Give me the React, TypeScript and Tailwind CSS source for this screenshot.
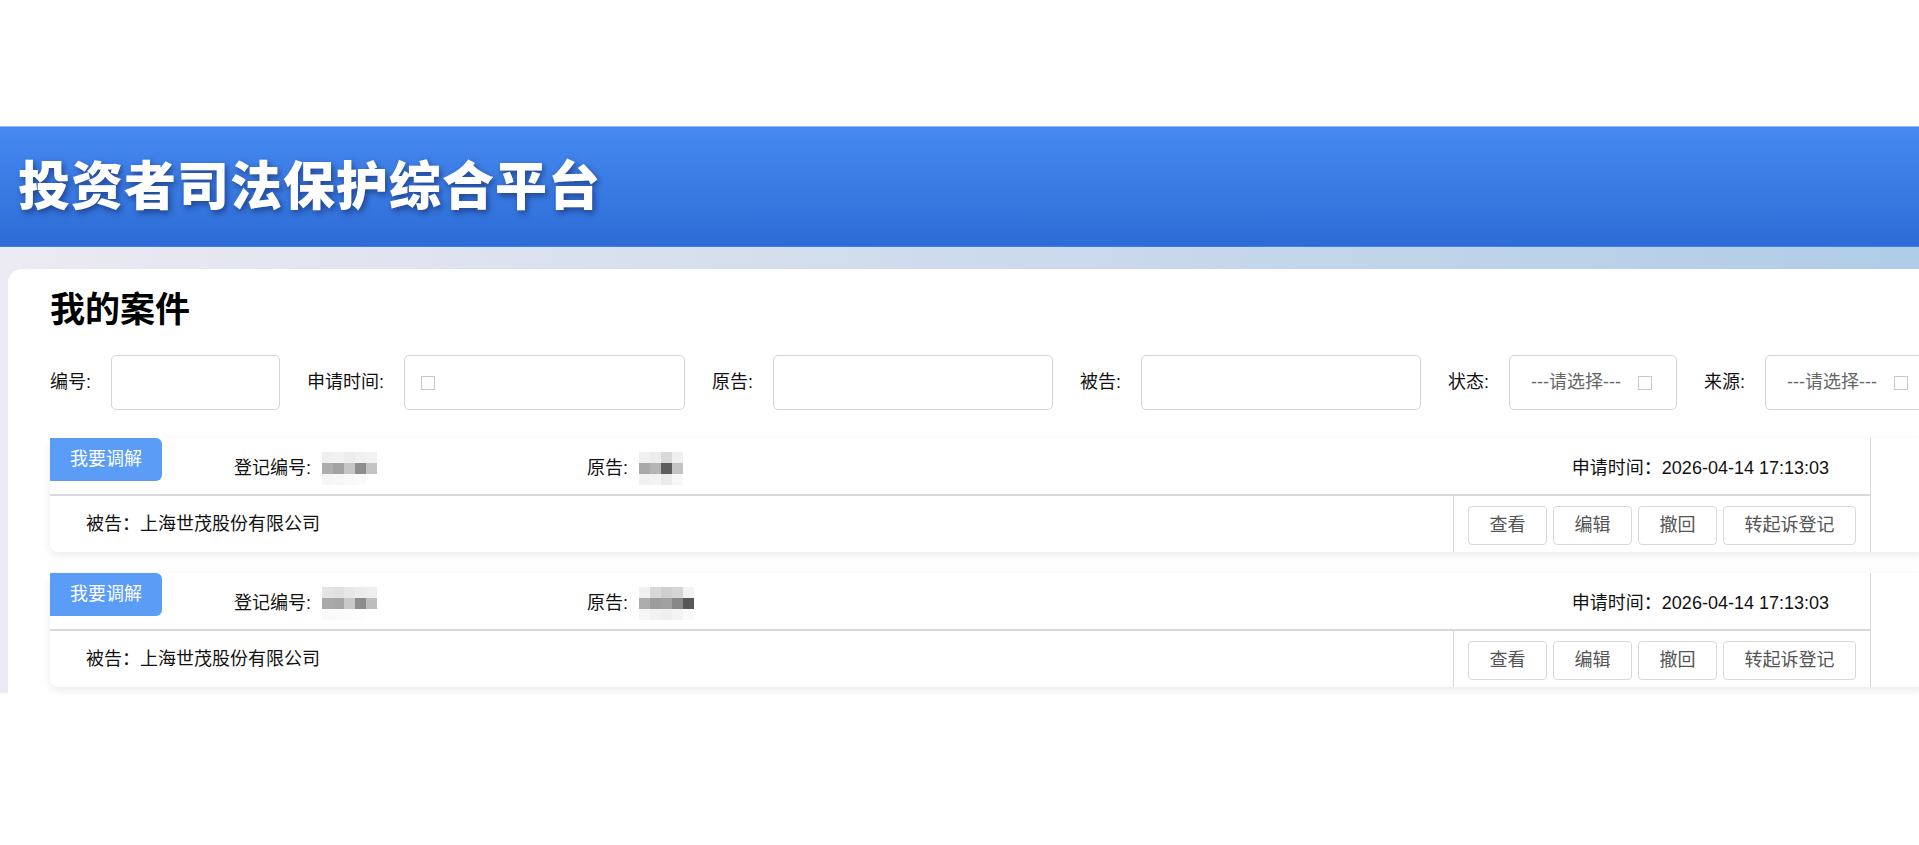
type MosaicProps = { rows: string[][] };

// pixelated redaction block used for masked case numbers / names
function Mosaic({ rows }: MosaicProps) {
  return (
    <div className="flex flex-col blur-[0.6px]">
      {rows.map((row, i) => (
        <div key={i} className="flex">
          {row.map((c, j) => (
            <div key={j} className="h-[11px] w-[11px]" style={{ backgroundColor: c }} />
          ))}
        </div>
      ))}
    </div>
  );
}

type CaseItem = {
  id: number;
  numberMask: string[][];
  plaintiffMask: string[][];
  defendant: string;
  appliedAt: string;
};

const cases: CaseItem[] = [
  {
    id: 1,
    numberMask: [
      ["#efefef", "#f1f1f1", "#ececec", "#f0f0f0", "#f2f2f2"],
      ["#adadad", "#a3a3a3", "#c6c6c6", "#8e8e8e", "#c3c3c3"],
      ["#f5f5f5", "#f7f7f7", "#f9f9f9", "#fbfbfb", "#ffffff"],
    ],
    plaintiffMask: [
      ["#f0f0f0", "#ececec", "#d9d9d9", "#efefef"],
      ["#a9a9a9", "#b5b5b5", "#5d5d5d", "#c3c3c3"],
      ["#f1f1f1", "#f3f3f3", "#eaeaea", "#f7f7f7"],
    ],
    defendant: "上海世茂股份有限公司",
    appliedAt: "2026-04-14 17:13:03",
  },
  {
    id: 2,
    numberMask: [
      ["#e4e4e4", "#e1e1e1", "#e7e7e7", "#ececec", "#eeeeee"],
      ["#a9a9a9", "#a6a6a6", "#c9c9c9", "#8d8d8d", "#bdbdbd"],
      ["#fafafa", "#fbfbfb", "#fcfcfc", "#fdfdfd", "#ffffff"],
    ],
    plaintiffMask: [
      ["#f1f1f1", "#d8d8d8", "#cfcfcf", "#d5d5d5", "#f3f3f3"],
      ["#adadad", "#9c9c9c", "#a0a0a0", "#888888", "#575757"],
      ["#f6f6f6", "#f2f2f2", "#efefef", "#f4f4f4", "#fbfbfb"],
    ],
    defendant: "上海世茂股份有限公司",
    appliedAt: "2026-04-14 17:13:03",
  },
];

function Tofu() {
  return <span className="inline-block h-[14px] w-[14px] border border-[#c9c9c9]" />;
}

function Field({ label, width, children }: { label: string; width: string; children?: React.ReactNode }) {
  return (
    <div className="flex items-center">
      <span className="mr-[20px] text-[18px] text-[#111]">{label}</span>
      <div className={`flex h-[55px] items-center rounded-[5px] border border-[#d6d6d6] bg-white ${width}`}>
        {children}
      </div>
    </div>
  );
}

function SelectBox({ label }: { label: string }) {
  return (
    <Field label={label} width="w-[168px]">
      <span className="ml-[21px] text-[18px] text-[#666]">---请选择---</span>
      <span className="ml-[17px] flex">
        <Tofu />
      </span>
    </Field>
  );
}

const actions = ["查看", "编辑", "撤回", "转起诉登记"];

function CaseRow({ item }: { item: CaseItem }) {
  return (
    <div className="w-[1876px] rounded-[8px] bg-white shadow-[0_3px_10px_rgba(0,0,0,0.09)]">
      <div className="w-[1821px] border-r border-[#d9d9d9]">
        <div className="flex h-[56px] items-start">
          <div className="flex h-[43px] w-[112px] items-center justify-center rounded-r-[6px] bg-[#5b9df6] text-[18px] text-white">
            我要调解
          </div>
          <div className="flex h-full flex-1 items-center pt-[4px] text-[18px] text-[#111]">
            <div className="ml-[72px] flex w-[353px] items-center">
              <span>登记编号:</span>
              <span className="ml-[11px]">
                <Mosaic rows={item.numberMask} />
              </span>
            </div>
            <div className="flex items-center">
              <span>原告:</span>
              <span className="ml-[11px]">
                <Mosaic rows={item.plaintiffMask} />
              </span>
            </div>
            <div className="ml-auto pr-[41px]">申请时间：{item.appliedAt}</div>
          </div>
        </div>
        <div className="flex h-[58px] border-t-2 border-[#d9d9d9]">
          <div className="flex flex-1 items-center pl-[36px] text-[18px] text-[#111]">
            被告：{item.defendant}
          </div>
          <div className="flex w-[417px] items-center justify-end gap-[6px] border-l border-[#d9d9d9] pr-[14px] pt-[3px]">
            {actions.map((a) => (
              <button
                key={a}
                className="h-[39px] rounded-[4px] border border-[#d9d9d9] bg-white px-[20.5px] text-[18px] text-[#555]"
              >
                {a}
              </button>
            ))}
          </div>
        </div>
      </div>
    </div>
  );
}

export default function App() {
  return (
    <div
      className="h-[845px] w-[1919px] overflow-hidden bg-white"
      style={{ fontFamily: '"Liberation Sans", "Noto Sans CJK SC", sans-serif' }}
    >
      <div className="h-[126px]" />
      <header className="flex h-[121px] items-center border-t border-b border-t-[#94b9f4] border-b-[#3f7fe9] bg-linear-to-b from-[#4689f1] to-[#2d6cd6] pl-[18px]">
        <h1 className="text-[52px] font-black leading-none tracking-[1px] text-white [text-shadow:2px_3px_6px_rgba(0,0,40,0.45)]">
          投资者司法保护综合平台
        </h1>
      </header>
      <div className="h-[446px] bg-linear-to-r from-[#eceaf2] to-[#b0cce6] pl-[8px] pt-[22px]">
        <div className="h-full w-[1960px] rounded-tl-[14px] bg-white pl-[42px] pt-[19px]">
          <h2 className="text-[35px] font-bold leading-[44px] text-black">我的案件</h2>
          <div className="mt-[23px] flex items-center gap-[27px]">
            <Field label="编号:" width="w-[169px]" />
            <Field label="申请时间:" width="w-[281px]">
              <span className="ml-[16px] flex">
                <Tofu />
              </span>
            </Field>
            <Field label="原告:" width="w-[280px]" />
            <Field label="被告:" width="w-[280px]" />
            <SelectBox label="状态:" />
            <SelectBox label="来源:" />
          </div>
          <div className="mt-[28px] flex flex-col gap-[21px]">
            {cases.map((c) => (
              <CaseRow key={c.id} item={c} />
            ))}
          </div>
        </div>
      </div>
    </div>
  );
}
